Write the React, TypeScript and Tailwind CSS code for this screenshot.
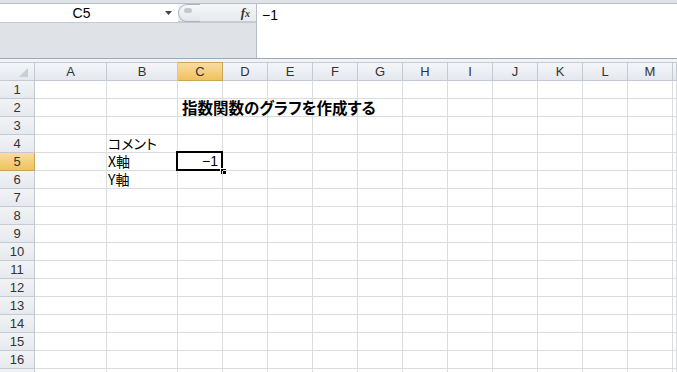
import React from "react";

const COLS = ["A", "B", "C", "D", "E", "F", "G", "H", "I", "J", "K", "L", "M", ""];
const ROWS = Array.from({ length: 17 }, (_, i) => i + 1);

const cellText: Record<string, { text: string; cls?: string }> = {
  "C2": { text: "指数関数のグラフを作成する", cls: "font-bold text-[15.5px] whitespace-nowrap ml-[3px]" },
  "B4": { text: "コメント" },
  "B5": { text: "X軸" },
  "B6": { text: "Y軸" },
};

export default function App() {
  return (
    <div
      className="w-[677px] h-[372px] overflow-hidden bg-white text-black"
      style={{ fontFamily: '"Liberation Sans", "Noto Sans CJK JP", sans-serif' }}
    >
      {/* Formula bar */}
      <div className="h-[59px] flex bg-[#dfe3e8] pt-[3px] border-b border-[#9ea7b3]">
        <div className="w-[256px] flex flex-col">
          <div className="h-[19px] flex border-t border-[#b7bfca] bg-white">
            <div className="w-[178px] flex items-center bg-white">
              <span className="flex-1 text-center text-[14px] leading-none pr-[2px]">C5</span>
              <svg width="8" height="5" viewBox="0 0 8 5" className="mr-[5px]">
                <path d="M0 0 H7 L3.5 4 Z" fill="#444" />
              </svg>
            </div>
            <div className="flex-1 flex items-center bg-gradient-to-b from-[#f4f6f8] to-[#e8ebef] border-b border-[#c9ced6]">
              <div className="w-[22px] h-[18px] rounded-l-full border border-r-0 border-[#aab3bf] bg-gradient-to-b from-[#f7f8fa] to-[#e3e7ec] flex items-start pt-[3px] pl-[5px]">
                <div className="w-[8px] h-[5px] rounded-full bg-[#c3c8cf]" />
              </div>
              <div className="flex-1" />
              <span
                className="italic font-bold text-[13px] mr-[6px] text-[#333]"
                style={{ fontFamily: '"Liberation Serif", serif' }}
              >
                f<span className="text-[10px]">x</span>
              </span>
            </div>
          </div>
          <div className="flex-1 bg-[#dfe3e8] border-t border-[#c3c9d2]" />
        </div>
        <div className="flex-1 bg-white border-l border-t border-[#b7bfca] pl-[5px] pt-[1px] text-[14px]">
          −1
        </div>
      </div>
      {/* light strip */}
      <div className="h-[3px] bg-[#f1f3f6]" />
      {/* Sheet */}
      <div className="grid grid-cols-[35px_72px_71px_repeat(11,45px)_1fr] grid-rows-[19px] auto-rows-[18px]">
        {/* header row */}
        <div className="border-t border-r border-b border-[#c5cad2] bg-gradient-to-b from-[#f4f6f9] to-[#e4e8ee] relative">
          <svg width="9" height="9" viewBox="0 0 9 9" className="absolute right-[6px] bottom-[3px]">
            <path d="M9 0 V9 H0 Z" fill="#c9ced6" />
          </svg>
        </div>
        {COLS.map((c) => (
          <div
            key={c || "n"}
            className={
              "border-t border-r border-b flex items-center justify-center text-[13px] " +
              (c === "C"
                ? "bg-gradient-to-b from-[#f9dc9f] to-[#f1c15c] border-[#c9a656] text-[#333]"
                : "bg-gradient-to-b from-[#f4f6f9] to-[#e4e8ee] border-[#c5cad2] text-[#333]")
            }
          >
            {c}
          </div>
        ))}
        {ROWS.map((r) => (
          <React.Fragment key={r}>
            <div
              className={
                "border-r border-b flex items-center justify-center text-[13px] leading-[17px] " +
                (r === 5
                  ? "bg-gradient-to-b from-[#f9dc9f] to-[#f1c15c] border-[#c9a656] text-[#333]"
                  : "bg-gradient-to-b from-[#f1f3f6] to-[#e6e9ee] border-[#c5cad2] text-[#333]")
              }
            >
              {r}
            </div>
            {COLS.map((c) => {
              const key = c + r;
              const t = cellText[key];
              const sel = key === "C5";
              return (
                <div
                  key={key}
                  className="relative border-r border-b border-[#dadcdd] flex items-center pl-[1px] text-[14px] [font-feature-settings:'palt']"
                  style={{ fontFamily: '"Noto Sans CJK JP", sans-serif' }}
                >
                  {t && <span className={"leading-[17px] z-10 " + (t.cls ?? "")}>{t.text}</span>}
                  {sel && (
                    <>
                      <span
                        className="absolute right-[4px] top-0 text-[14px] leading-[17px]"
                        style={{ fontFamily: '"Liberation Sans", sans-serif' }}
                      >
                        −1
                      </span>
                      <div className="absolute left-[-2px] top-[-2px] right-[-1px] bottom-[-1px] border-2 border-black" />
                      <div className="absolute right-[-4px] bottom-[-4px] w-[6px] h-[6px] bg-black border-l border-t border-white" />
                    </>
                  )}
                </div>
              );
            })}
          </React.Fragment>
        ))}
      </div>
    </div>
  );
}
